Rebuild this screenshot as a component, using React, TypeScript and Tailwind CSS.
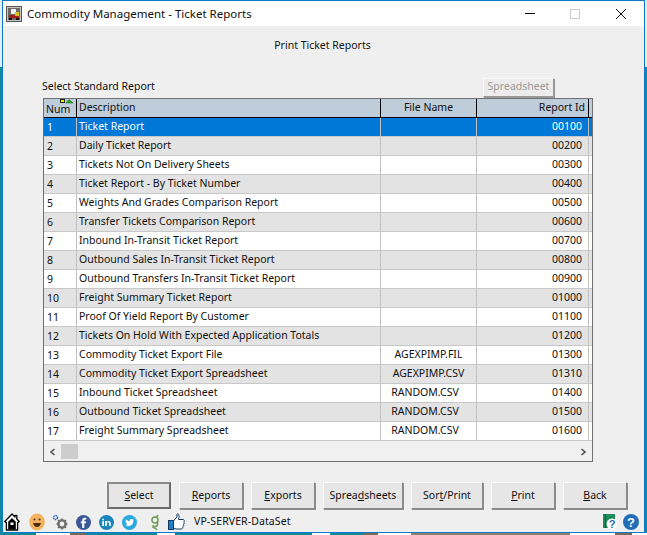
import React from 'react';

const rows = [
  ['1', 'Ticket Report', '', '00100'],
  ['2', 'Daily Ticket Report', '', '00200'],
  ['3', 'Tickets Not On Delivery Sheets', '', '00300'],
  ['4', 'Ticket Report - By Ticket Number', '', '00400'],
  ['5', 'Weights And Grades Comparison Report', '', '00500'],
  ['6', 'Transfer Tickets Comparison Report', '', '00600'],
  ['7', 'Inbound In-Transit Ticket Report', '', '00700'],
  ['8', 'Outbound Sales In-Transit Ticket Report', '', '00800'],
  ['9', 'Outbound Transfers In-Transit Ticket Report', '', '00900'],
  ['10', 'Freight Summary Ticket Report', '', '01000'],
  ['11', 'Proof Of Yield Report By Customer', '', '01100'],
  ['12', 'Tickets On Hold With Expected Application Totals', '', '01200'],
  ['13', 'Commodity Ticket Export File', 'AGEXPIMP.FIL', '01300'],
  ['14', 'Commodity Ticket Export Spreadsheet', 'AGEXPIMP.CSV', '01310'],
  ['15', 'Inbound Ticket Spreadsheet', 'RANDOM.CSV', '01400'],
  ['16', 'Outbound Ticket Spreadsheet', 'RANDOM.CSV', '01500'],
  ['17', 'Freight Summary Spreadsheet', 'RANDOM.CSV', '01600'],
];

const buttons: { pre: string; key: string; post: string; w: string; isDefault?: boolean }[] = [
  { pre: '', key: 'S', post: 'elect', w: 'w-[64px]', isDefault: true },
  { pre: '', key: 'R', post: 'eports', w: 'w-[64px]' },
  { pre: '', key: 'E', post: 'xports', w: 'w-[64px]' },
  { pre: 'Sprea', key: 'd', post: 'sheets', w: 'w-[80px]' },
  { pre: 'Sor', key: 't', post: '/Print', w: 'w-[72px]' },
  { pre: '', key: 'P', post: 'rint', w: 'w-[64px]' },
  { pre: '', key: 'B', post: 'ack', w: 'w-[64px]' },
];

function AppIcon() {
  return (
    <svg width="16" height="16" viewBox="0 0 16 16" className="shrink-0">
      <rect x="0.5" y="0.5" width="15" height="15" fill="#c8c4bc" stroke="#555" />
      <rect x="2" y="2" width="12" height="12" fill="#6b6a66" />
      <rect x="5" y="3" width="5" height="5" fill="#f2f2f2" />
      <rect x="3" y="9" width="10" height="3" fill="#a81c14" />
      <rect x="9" y="6" width="4" height="4" fill="#d8c020" />
      <rect x="3" y="12" width="3" height="2" fill="#111" />
      <rect x="10" y="12" width="3" height="2" fill="#111" />
    </svg>
  );
}

function StatusIcons() {
  return (
    <div className="flex items-center">
      {/* home */}
      <svg width="16" height="18" viewBox="0 0 16 18" className="ml-[1px]">
        <path d="M8 1 L0.8 8.5 L2.4 9.6 L2.4 17 H13.6 V9.6 L15.2 8.5 L12.8 6 V2.5 H11 V4 L8 1 Z" fill="#fff" stroke="#000" strokeWidth="1.3" strokeLinejoin="round" />
        <path d="M8 5 L11.8 8.8 V16.6 H4.2 V8.8 Z" fill="#000" />
        <rect x="6.5" y="9.5" width="3" height="2.5" fill="#fff" />
      </svg>
      {/* smiley */}
      <svg width="16" height="18" viewBox="0 0 16 18" className="ml-[9px]">
        <ellipse cx="8" cy="9" rx="7.8" ry="8.5" fill="#f4b25e" />
        <circle cx="5.5" cy="6.5" r="1" fill="#4a3010" />
        <circle cx="10.5" cy="6.5" r="1" fill="#4a3010" />
        <path d="M4 10 H12 Q11 14 8 14 Q5 14 4 10 Z" fill="#4a3010" />
      </svg>
      {/* gears */}
      <svg width="16" height="16" viewBox="0 0 16 16" className="ml-[7px]">
        <circle cx="3.5" cy="3.5" r="2" fill="none" stroke="#3a6fb5" strokeWidth="1.6" strokeDasharray="1.5 0.6" />
        <circle cx="10" cy="10" r="3.6" fill="none" stroke="#6e6e6e" strokeWidth="2.4" />
        <path d="M10 4.5 V6 M10 14 V15.5 M4.5 10 H6 M14 10 H15.5 M6 6 L7.2 7.2 M12.8 12.8 L14 14 M14 6 L12.8 7.2 M7.2 12.8 L6 14" stroke="#6e6e6e" strokeWidth="1.6" />
      </svg>
      {/* facebook */}
      <svg width="15" height="15" viewBox="0 0 15 15" className="ml-[8px]">
        <circle cx="7.5" cy="7.5" r="7.5" fill="#3b5998" />
        <path d="M8.3 13 V8.3 H10 L10.2 6.4 H8.3 V5.3 C8.3 4.7 8.6 4.4 9.2 4.4 H10.3 V2.7 H8.7 C7.1 2.7 6.2 3.7 6.2 5.1 V6.4 H4.8 V8.3 H6.2 V13 Z" fill="#fff" />
      </svg>
      {/* linkedin */}
      <svg width="15" height="15" viewBox="0 0 15 15" className="ml-[8px]">
        <circle cx="7.5" cy="7.5" r="7.5" fill="#1a84bc" />
        <rect x="3.3" y="6" width="1.7" height="5" fill="#fff" />
        <rect x="3.3" y="3.8" width="1.7" height="1.5" fill="#fff" />
        <path d="M6.2 6 H7.8 V6.8 C8.2 6.2 8.8 5.9 9.6 5.9 C11 5.9 11.8 6.8 11.8 8.4 V11 H10.1 V8.6 C10.1 7.8 9.8 7.3 9.1 7.3 C8.4 7.3 7.9 7.8 7.9 8.6 V11 H6.2 Z" fill="#fff" />
      </svg>
      {/* twitter */}
      <svg width="15" height="15" viewBox="0 0 15 15" className="ml-[8px]">
        <circle cx="7.5" cy="7.5" r="7.5" fill="#2aa9e0" />
        <path d="M12 4.8 C11.6 5 11.3 5.1 10.9 5.1 C11.3 4.9 11.6 4.5 11.7 4.1 C11.3 4.3 10.9 4.5 10.5 4.6 C9.5 3.5 7.4 4.4 7.8 6.2 C6.2 6.1 4.8 5.4 3.9 4.3 C3.4 5.1 3.7 6.2 4.4 6.7 C4.1 6.7 3.9 6.6 3.6 6.5 C3.6 7.4 4.2 8.1 5 8.3 C4.7 8.4 4.5 8.4 4.2 8.3 C4.4 9 5.1 9.6 5.9 9.6 C5.1 10.2 4.1 10.5 3.2 10.4 C7.6 12.8 12 9.4 11.2 5.6 C11.5 5.4 11.8 5.1 12 4.8 Z" fill="#fff" />
      </svg>
      {/* growth g */}
      <svg width="10" height="18" viewBox="0 0 10 18" className="ml-[13px]">
        <circle cx="5" cy="7" r="3" fill="none" stroke="#6f9a5a" strokeWidth="1.5" />
        <path d="M8 2 L6.5 4 M7.5 8 V11.5 C7.5 14 3.5 14 2.5 12.5 M2.5 14 C4 15 6.5 15.5 7 17" fill="none" stroke="#6f9a5a" strokeWidth="1.5" />
      </svg>
      {/* thumb up */}
      <svg width="17" height="18" viewBox="0 0 17 18" className="ml-[8px]">
        <rect x="0.5" y="7.5" width="5" height="9" fill="#1f7fc4" stroke="#123a60" />
        <path d="M5.5 8 L9 4 V1 C11 0.5 11.5 3 10.5 6.5 H15.5 C16.5 7 16.5 8.5 15.7 9 C16.5 9.8 16.3 11 15.4 11.4 C16 12.3 15.6 13.3 14.8 13.6 C15.1 14.8 14.5 16 13.2 16 H8 L5.5 15 Z" fill="#fff" stroke="#123a60" />
      </svg>
    </div>
  );
}

export default function App() {
  return (
    <div className="h-[535px] w-[647px] overflow-hidden bg-[linear-gradient(#e4eef6_67px,#0e8a9c_67px)] font-['Liberation_Sans',sans-serif] text-[12px] text-[#101010]">
      <div className="ml-[2px] flex h-[533px] w-[643px] flex-col border border-[#0f78c8] bg-[#efefef]">
        {/* Title bar */}
        <div className="flex h-[25px] shrink-0 items-center bg-white pl-[3px]">
          <AppIcon />
          <span className="ml-[5px] font-['Noto_Sans',sans-serif] text-[11.5px]">Commodity Management - Ticket Reports</span>
          <div className="ml-auto flex items-center">
            <div className="h-px w-[10px] bg-black" />
            <div className="ml-[35px] h-[10px] w-[10px] border border-[#cccccc]" />
            <svg width="10" height="10" viewBox="0 0 10 10" className="ml-[36px] mr-[18px]">
              <path d="M0 0 L10 10 M10 0 L0 10" stroke="#111" strokeWidth="1" />
            </svg>
          </div>
        </div>

        <div className="flex flex-1 flex-col">
          <div className="mt-[12px] pr-[2px] text-center leading-[15px] [font-family:'Noto_Sans',sans-serif] text-[10.5px]">Print Ticket Reports</div>

          <div className="mt-[24px] flex h-[20px] items-center pl-[39px] pr-[90px]">
            <span className="[font-family:'Noto_Sans',sans-serif] text-[10.5px]">Select Standard Report</span>
            <button className="ml-auto h-[19px] w-[71px] border border-[#999] border-t-[#f8f8f8] border-l-[#f8f8f8] bg-[#ececec] text-[10.5px] text-[#9a9a9a] shadow-[1px_1px_0_#999] [font-family:'Noto_Sans',sans-serif]">Spreadsheet</button>
          </div>

          {/* Grid */}
          <div className="ml-[40px] mt-[1px] w-[550px] border border-[#707070] bg-[#efefef] [font-family:'Noto_Sans',sans-serif] text-[10.5px]">
            <div className="flex h-[19px] border-b border-black bg-[#bfcddb] leading-[17px]">
              <div className="relative w-[33px] border-r border-black pl-[2px] pt-[2px]">
                Num
                <svg width="15" height="5" viewBox="0 0 15 5" className="absolute right-[1px] top-0">
                  <rect x="0.5" y="0.5" width="4" height="3" fill="#f4e800" stroke="#222" />
                  <path d="M6 4 L9 0.5 L13 4 Z" fill="#2eaa18" stroke="#0a5a0a" strokeWidth="0.5" />
                </svg>
              </div>
              <div className="w-[304px] border-r border-black pl-[2px]">Description</div>
              <div className="w-[96px] border-r border-black text-center">File Name</div>
              <div className="w-[112px] border-r border-black pr-[3px] text-right">Report Id</div>
            </div>
            {rows.map((r, i) => {
              const selected = i === 0;
              const shade = !selected && i % 2 === 1;
              const bg = selected ? 'bg-[#0078d7] text-white' : shade ? 'bg-[#e3e3e3]' : 'bg-white';
              return (
                <div key={r[0]} className={`flex h-[19px] border-b border-[#c8c8c8] leading-[17px] ${bg}`}>
                  <div className="w-[33px] border-r border-[#c0c0c0] pl-[3px] pt-[1px]">{r[0]}</div>
                  <div className="w-[304px] border-r border-[#c0c0c0] pl-[2px]">{r[1]}</div>
                  <div className={`w-[96px] border-r border-[#c0c0c0] text-center ${r[2].startsWith('RANDOM') ? 'pr-[7px]' : ''}`}>{r[2]}</div>
                  <div className="w-[112px] border-r border-[#c0c0c0] pr-[6px] text-right">{r[3]}</div>
                </div>
              );
            })}
            {/* Horizontal scrollbar */}
            <div className="mt-[1px] flex h-[19px] items-center bg-[#f0f0f0]">
              <svg width="8" height="8" viewBox="0 0 8 8" className="ml-[5px]">
                <path d="M5.5 1 L2 4 L5.5 7" fill="none" stroke="#505050" strokeWidth="1.6" />
              </svg>
              <div className="ml-[4px] h-[15px] w-[17px] bg-[#cdcdcd]" />
              <svg width="8" height="8" viewBox="0 0 8 8" className="ml-auto mr-[5px]">
                <path d="M2.5 1 L6 4 L2.5 7" fill="none" stroke="#505050" strokeWidth="1.6" />
              </svg>
            </div>
          </div>

          {/* Action buttons */}
          <div className="mt-[20px] flex gap-[8px] pl-[104px] [font-family:'Noto_Sans',sans-serif] text-[10.5px]">
            {buttons.map((b) => (
              <button
                key={b.post}
                className={`h-[27px] ${b.w} bg-[#e6e6e6] ${b.isDefault ? 'border-2 border-[#6a6a6a] border-t-[#8a8a8a] border-l-[#8a8a8a]' : 'border border-[#8a8a8a] border-t-[#fafafa] border-l-[#fafafa] shadow-[1px_1px_0_#8a8a8a]'}`}
              >
                {b.pre}
                <span className="underline">{b.key}</span>
                {b.post}
              </button>
            ))}
          </div>

          {/* Status row */}
          <div className="mt-[3px] flex h-[20px] items-center">
            <StatusIcons />
            <span className="ml-[9px] [font-family:'Noto_Sans',sans-serif] text-[10.5px] tracking-[0.1px]">VP-SERVER-DataSet</span>
            <div className="ml-auto mr-[5px] flex items-center gap-[6px]">
              <svg width="14" height="16" viewBox="0 0 14 16">
                <rect x="0" y="0" width="12" height="14" fill="#1f8a5a" />
                <rect x="2" y="0" width="1" height="14" fill="#0c5a38" />
                <circle cx="9" cy="10" r="5.5" fill="#fff" />
                <text x="9" y="14" textAnchor="middle" fontSize="11" fontWeight="700" fill="#1f6fb8" fontFamily="Liberation Sans">?</text>
              </svg>
              <svg width="16" height="16" viewBox="0 0 16 16">
                <circle cx="8" cy="8" r="8" fill="#1f6fb8" />
                <text x="8" y="12.5" textAnchor="middle" fontSize="13" fontWeight="700" fill="#fff" fontFamily="Liberation Sans">?</text>
              </svg>
            </div>
          </div>
        </div>
      </div>
      {/* Desktop showing below the window */}
      <div className="flex h-[2px]">
        <div className="ml-[36px] w-[34px] bg-white" />
        <div className="w-[15px] bg-[#7a6a58]" />
        <div className="ml-[72px] w-[18px] bg-white" />
        <div className="ml-[137px] w-[18px] bg-white" />
        <div className="ml-[34px] w-[14px] bg-[#7a6a58]" />
        <div className="w-[33px] bg-white" />
        <div className="w-[159px] bg-[#8a8070]" />
        <div className="w-[45px] bg-white" />
        <div className="w-[17px] bg-[#7a6a58]" />
        <div className="w-[15px] bg-white" />
      </div>
    </div>
  );
}
